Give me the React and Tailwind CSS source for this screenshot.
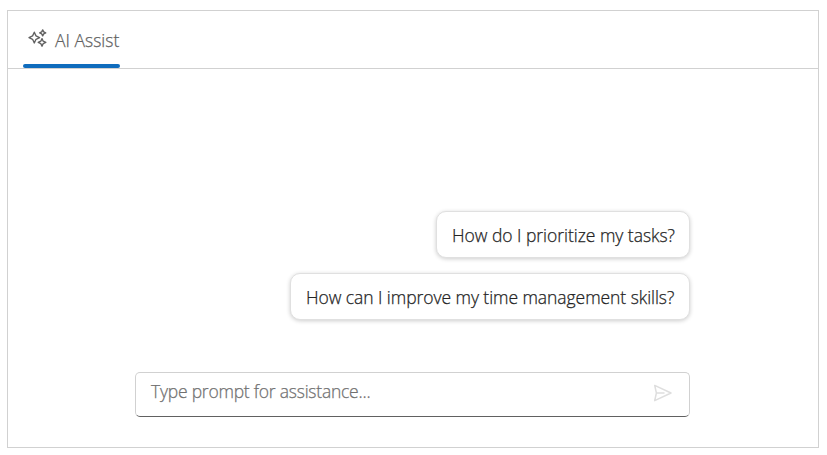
const font = "font-['Open_Sans','Noto_Sans',sans-serif]";

function SparkleIcon() {
  return (
    <svg width="19" height="19" viewBox="0 0 19 19" fill="none" stroke="#616161" strokeWidth="1.35" strokeLinejoin="round">
      <path d="M6.3 3.2 L8 6.9 L11.6 8.6 L8 10.3 L6.3 14 L4.6 10.3 L1 8.6 L4.6 6.9Z" />
      <path d="M14.7 .9 L15.7 2.9 L17.7 3.9 L15.7 4.9 L14.7 6.9 L13.7 4.9 L11.7 3.9 L13.7 2.9Z" />
      <path d="M14 9.6 L15.2 12.2 L17.8 13.4 L15.2 14.6 L14 17.2 L12.8 14.6 L10.2 13.4 L12.8 12.2Z" />
    </svg>
  );
}

function SendIcon() {
  return (
    <svg width="19" height="18" viewBox="0 0 19 18" fill="none" stroke="#dedede" strokeWidth="1.5" strokeLinejoin="round" strokeLinecap="round">
      <path d="M1.7 1.4 L18 9 L1.7 16.6 L3.4 9 Z M3.4 9 H11" />
    </svg>
  );
}

function Suggestion({ className, textClass, children }) {
  return (
    <button type="button" className={`flex h-[47px] items-center rounded-[10px] border border-[#e0e0e0] bg-white pl-[15px] pt-px text-[#242424] shadow-[0_1px_4px_rgba(0,0,0,0.2)] ${className}`}>
      <span className={`whitespace-nowrap ${textClass}`}>{children}</span>
    </button>
  );
}

export default function App() {
  return (
    <div className={`h-[455px] w-[827px] overflow-hidden bg-white pl-[7px] pt-[10px] text-[17.5px] font-light leading-6 [-webkit-text-stroke:0.25px] ${font}`}>
      <section className="flex h-[438px] w-[812px] flex-col border border-[#d1d1d1]">
        <header className="flex h-[58px] shrink-0 border-b border-[#d1d1d1] pl-[15px]">
          <div className="flex h-[57px] w-[97px] flex-col justify-between">
            <div className="flex items-start pl-[5px] pt-[17px] text-[#616161]">
              <span className="pt-px"><SparkleIcon /></span>
              <span className="ml-2 whitespace-nowrap">AI Assist</span>
            </div>
            <div className="h-1 rounded-full bg-[#0f6cbd]" />
          </div>
        </header>
        <main className="flex w-[682px] grow flex-col items-end pt-[142px]">
          <Suggestion className="w-[254px]" textClass="tracking-[-0.03px]">How do I prioritize my tasks?</Suggestion>
          <Suggestion className="mt-[15px] w-[400px]" textClass="tracking-[-0.06px]">How can I improve my time management skills?</Suggestion>
          <div className="mt-[52px] flex h-[45px] w-[555px] justify-between rounded-[5px] border border-[#d1d1d1] border-b-[#616161] pl-[15px] pr-[17px]">
            <span className="whitespace-nowrap pt-[6px] tracking-[-0.23px] text-[#707070]">Type prompt for assistance...</span>
            <span className="pt-[11px]"><SendIcon /></span>
          </div>
        </main>
      </section>
    </div>
  );
}
